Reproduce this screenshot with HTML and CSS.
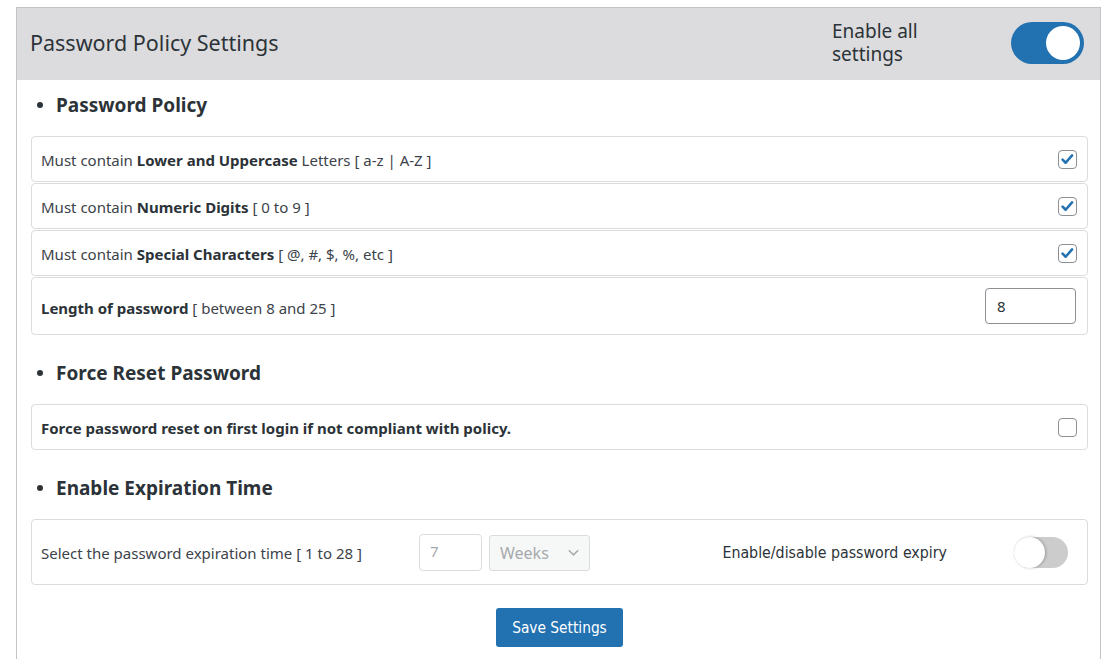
FILE: index.html
```html
<!DOCTYPE html>
<html>
<head>
<meta charset="utf-8">
<link rel="stylesheet" href="styles.css">
</head>
<body>
<div class="page">
  <div class="panel">
    <div class="panel-head">
      <h2 class="title">Password Policy Settings</h2>
      <div class="head-right">
        <span class="enable-all">Enable all settings</span>
        <span class="switch switch-on"><span class="knob"></span></span>
      </div>
    </div>
    <div class="panel-body">
      <h3 class="section">Password Policy</h3>
      <div class="rows">
        <div class="row">
          <span>Must contain <b>Lower and Uppercase</b> Letters [ a-z | A-Z ]</span>
          <span class="cb cb-on"><svg viewBox="0 0 20 20" width="17" height="17"><path d="M4.2 10.2l3.6 3.6 7.6-8.6" fill="none" stroke="#2271b1" stroke-width="3" stroke-linecap="round" stroke-linejoin="round"/></svg></span>
        </div>
        <div class="row">
          <span>Must contain <b>Numeric Digits</b> [ 0 to 9 ]</span>
          <span class="cb cb-on"><svg viewBox="0 0 20 20" width="17" height="17"><path d="M4.2 10.2l3.6 3.6 7.6-8.6" fill="none" stroke="#2271b1" stroke-width="3" stroke-linecap="round" stroke-linejoin="round"/></svg></span>
        </div>
        <div class="row">
          <span>Must contain <b>Special Characters</b> [ @, #, $, %, etc ]</span>
          <span class="cb cb-on"><svg viewBox="0 0 20 20" width="17" height="17"><path d="M4.2 10.2l3.6 3.6 7.6-8.6" fill="none" stroke="#2271b1" stroke-width="3" stroke-linecap="round" stroke-linejoin="round"/></svg></span>
        </div>
        <div class="row row-tall">
          <span><b>Length of password</b> [ between 8 and 25 ]</span>
          <span class="num-input">8</span>
        </div>
      </div>

      <h3 class="section sec-gap">Force Reset Password</h3>
      <div class="rows">
        <div class="row">
          <b>Force password reset on first login if not compliant with policy.</b>
          <span class="cb"></span>
        </div>
      </div>

      <h3 class="section sec-gap">Enable Expiration Time</h3>
      <div class="rows">
        <div class="row row-exp">
          <span class="exp-label">Select the password expiration time [ 1 to 28 ]</span>
          <span class="exp-num">7</span>
          <span class="exp-select">Weeks<svg viewBox="0 0 16 16" width="15" height="15"><path d="M3 5.5l5 5 5-5" fill="none" stroke="#a7aaad" stroke-width="1.6"/></svg></span>
          <span class="exp-right">
            <span class="narrow expiry-label">Enable/disable password expiry</span>
            <span class="switch switch-off"><span class="knob"></span></span>
          </span>
        </div>
      </div>

      <div class="actions">
        <span class="btn narrow">Save Settings</span>
      </div>
    </div>
  </div>
</div>
</body>
</html>
```

FILE: styles.css
```css
* { box-sizing: border-box; }
html, body { margin: 0; background: #fff; }
body {
  font-family: "Noto Sans", "Open Sans", sans-serif;
  color: #3c434a;
  font-size: 15px;
}
.page { padding: 7px 0 0 16px; width: 1101px; }
.panel {
  border: 1px solid #c3c4c7;
  border-bottom: none;
  height: 700px;
}
.panel-head {
  background: #dcdcde;
  height: 72px;
  display: flex;
  align-items: center;
  justify-content: space-between;
  padding: 0 16px 0 13px;
}
.title {
  margin: 0 0 3px;
  font-size: 21.5px;
  font-weight: 400;
  color: #2c3338;
}
.head-right { display: flex; align-items: center; }
.enable-all {
  width: 110px;
  font-size: 19px;
  line-height: 23px;
  color: #2c3338;
  margin-right: 69px;
  margin-bottom: 2px;
}
.switch {
  position: relative;
  display: inline-block;
  border-radius: 999px;
}
.switch-on { width: 73px; height: 42px; background: #2271b1; margin-bottom: 2px; }
.switch-on .knob {
  position: absolute; right: 4px; top: 4px;
  width: 34px; height: 34px; border-radius: 50%; background: #fff;
}
.switch-off { width: 54px; height: 31px; background: #cccccc; }
.switch-off .knob {
  position: absolute; left: 0; top: 0;
  width: 31px; height: 31px; border-radius: 50%; background: #fff;
  box-shadow: 1px 0 3px rgba(0,0,0,0.25);
}
.panel-body { padding: 0 12px 0 14px; }
.section {
  margin: 12px 0 18px;
  height: 26px;
  line-height: 26px;
  font-size: 19px;
  font-weight: 700;
  color: #2c3338;
  display: flex;
  align-items: center;
}
.section::before {
  content: "";
  width: 6px; height: 6px;
  border-radius: 50%;
  background: #2c3338;
  margin: 0 13px 0 6px;
}
.sec-gap { margin-top: 25px; }
.rows { display: flex; flex-direction: column; gap: 1px; }
.row {
  height: 46px;
  border: 1px solid #dcdcde;
  border-radius: 4px;
  display: flex;
  align-items: center;
  justify-content: space-between;
  padding: 1px 10px 0 9px;
}
.row b { font-weight: 700; color: #2c3338; }
.row-tall { height: 58px; padding-right: 11px; padding-top: 0; }
.row-tall > span:first-child { margin-top: 4px; }
.cb {
  width: 19px; height: 19px;
  border: 1px solid #8c8f94;
  border-radius: 4px;
  display: flex; align-items: center; justify-content: center;
}
.num-input {
  width: 91px; height: 36px;
  border: 1px solid #8c8f94;
  border-radius: 4px;
  padding-left: 11px;
  display: flex; align-items: center;
  font-size: 15px;
  color: #2c3338;
}
.row-exp { height: 66px; justify-content: flex-start; padding-right: 19px; }
.exp-label { width: 378px; }
.exp-num {
  width: 63px; height: 37px;
  border: 1px solid #dcdcde;
  border-radius: 4px;
  color: #a7aaad;
  font-size: 15px;
  padding: 0 0 4px 10px;
  display: flex; align-items: center;
  margin-right: 7px;
}
.exp-select {
  width: 101px; height: 36px;
  border: 1px solid #dcdcde;
  border-radius: 3px;
  background: #f6f7f7;
  color: #a7aaad;
  font-size: 16px;
  padding: 0 8px 0 10px;
  display: flex; align-items: center; justify-content: space-between;
}
.exp-right {
  margin-left: auto;
  display: flex; align-items: center;
  gap: 67px;
  color: #2c3338;
}
.narrow {
  font-family: "DejaVu Sans Condensed", "Noto Sans", sans-serif;
  font-stretch: condensed;
}
.expiry-label { font-size: 15.8px; }
.actions { display: flex; justify-content: center; margin-top: 23px; }
.btn {
  background: #2271b1;
  color: #fff;
  width: 127px; height: 39px;
  border-radius: 3px;
  display: flex; align-items: center; justify-content: center;
  font-size: 15.3px;
}
```
